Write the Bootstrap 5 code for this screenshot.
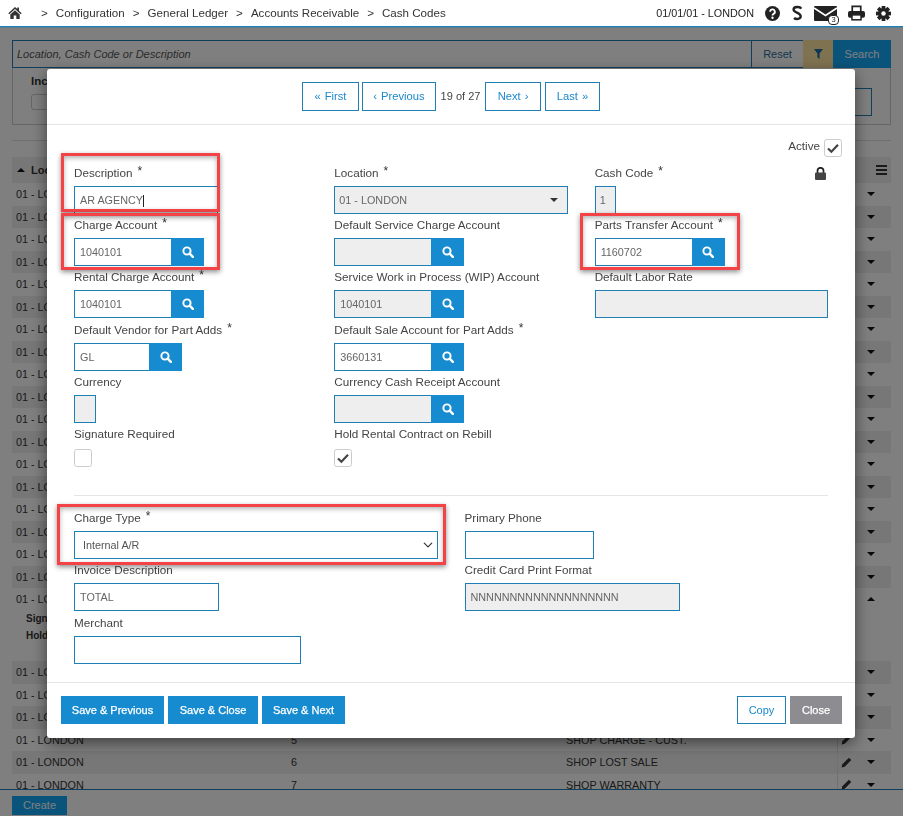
<!DOCTYPE html>
<html lang="en">
<head>
<meta charset="utf-8">
<title>Cash Codes</title>
<link href="https://cdn.jsdelivr.net/npm/bootstrap@5.3.0/dist/css/bootstrap.min.css" rel="stylesheet">
<style>
body{font-family:"Liberation Sans",Arial,sans-serif;font-size:10.8px;color:#333;background:#fff}
.ico{display:block;fill:currentColor}
.topnav{height:27px;padding:0 12px 0 8px;background:#fff;border-bottom:1px solid #1f7fb5;box-shadow:0 1px 0 rgba(31,127,181,.4);position:relative;z-index:1060;flex:none;flex-wrap:nowrap;color:#222}
.crumbs{margin:0;font-size:11.6px;--bs-breadcrumb-divider:'>';--bs-breadcrumb-item-padding-x:8px;--bs-breadcrumb-margin-bottom:0;--bs-breadcrumb-divider-color:#333;--bs-breadcrumb-item-active-color:#333;align-items:center}
.crumbs .breadcrumb-item:first-child{margin-right:11px}
.crumbs .breadcrumb-item+.breadcrumb-item{padding-left:8px}
.crumbs .crumb-first::before{content:">"}
.crumbs a{color:#333;text-decoration:none}
.nav-tools{gap:11px}
.nav-date{font-size:10.8px}
.mail-wrap{position:relative;width:23px;height:15px;margin-top:1px}
.mail-badge{position:absolute;left:14px;top:9px;width:11px;height:10px;background:#fff;border:1px solid #222;border-radius:4px;font-size:7.5px;line-height:8px;text-align:center;color:#222}
.bgmain{min-height:0;padding:13px 12px 0 12px;overflow:hidden}
.srch-in{height:28px;border:1px solid #1f7fb5;border-radius:0;font-size:11px;padding:0 4px;font-style:italic;box-shadow:none}
.srch-in::placeholder{color:#555}
.bg-btn{border-radius:0;font-size:11px;padding:0;height:28px;display:flex;align-items:center;justify-content:center}
.bg-reset{width:53px;background:#fff;border:1px solid #1f7fb5;color:#1f6f9f}
.bg-filter{width:31px;background:#ffe4a0;border:0;color:#1a6fa8}
.bg-search{width:58px;background:#14a8f8;border:0;color:#fff}
.filter-panel{height:57px;border:1px solid #ccc;border-top:0;padding:6px 18px 0 18px;position:relative}
.filter-title{font-size:11.5px;font-weight:700;line-height:14px}
.filter-row{margin-top:4px}
.filter-box{width:100px;height:16px;margin-top:2px;border:1px solid #ccc;border-radius:3px}
.filter-input{width:100px;height:28px;margin-top:-4px;border:1px solid #1f7fb5}
.thin-line{margin:15px 0 16px;border-top:1px solid #ddd;opacity:1}
.grid-head{height:26px;background:#eee;font-size:11px;font-weight:700;padding-left:5px}
.head-left{gap:6px}
.cu{width:0;height:0;border-left:4px solid transparent;border-right:4px solid transparent;border-bottom:4px solid #111;display:block}
.cd{width:0;height:0;border-left:4px solid transparent;border-right:4px solid transparent;border-top:4px solid #111;display:block}
.g-row{height:22.5px;display:flex;align-items:center}
.g-row:nth-child(even){background:#eee}
.g-big{height:73px;display:block;background:#fff!important;position:relative}
.g-big-top{height:22.5px;display:flex;align-items:center}
.g-c1{width:275px;padding-left:4px;flex:none}
.g-c2{width:275px;padding-left:4px;flex:none}
.g-c3{flex:1 1 auto;padding-left:4px;min-width:0}
.g-c4{width:23px;height:100%;flex:none;border-left:1px solid #e2e2e2;display:flex;align-items:center;justify-content:center;padding-right:5px}
.g-c5{width:31px;flex:none;display:flex;justify-content:center;padding-right:10px}
.g-det{font-size:10px;font-weight:700;line-height:17px;padding-left:14px;margin-top:-1px}
.bgfoot{height:27px;flex:none;border-top:1px solid #1f7fb5;background:#fff;padding:6px 0 0 12px}
.btn-create{width:55px;height:19px;background:#14a8f8;color:#fff;border:0;border-radius:0;font-size:11px;padding:0;display:block}

.dlg{max-width:808px;width:808px;margin:69px 0 0 47px}
.dlg .modal-content{border:0;border-radius:3px;box-shadow:0 5px 15px rgba(0,0,0,.5);position:relative;color:#444}
.dlg .modal-header{height:56px;padding:0;border-bottom:1px solid #e5e5e5;border-radius:0;gap:3px;font-size:11px}
.pg-btn{height:29px;padding:0;background:#fff;color:#1a88cc;border:1px solid #1f7fb5;border-radius:0;font-size:11.2px;display:flex;align-items:center;justify-content:center;gap:4px}
.pg-first{width:57px}.pg-prev{width:74px}.pg-next{width:56px}.pg-last{width:55px;margin-left:1px}
.pg-of{width:43px;text-align:center;color:#444}
.dlg .modal-body{padding:14px 27px 0;height:557px;flex:none}
.act-line{height:18px;margin-right:-14px;margin-bottom:8px;font-size:11.7px;gap:4px}
.act-text{position:relative;top:-2px}
.lbl{display:block;height:16px;line-height:16px;margin:0 0 5px;font-size:11.7px;color:#444;white-space:nowrap}
.req{font-size:12px;position:relative;top:-2px;margin-left:5px;color:#333}
.fld{height:28px;min-height:0;padding:0 5px;font-size:10.8px;color:#666;border:1px solid #1f7fb5;border-radius:0;box-shadow:none}
.fld:disabled{background-color:#eee;color:#666;opacity:1}
.form-grp{height:52.2px}
.form-grid{--bs-gutter-x:27px}
.w-145{width:144px}
.w-145b{width:145px}
.w-21{width:21px;padding:0 4px}
.w-22{width:22px}
.w-234{width:234px}
.w-364{width:364px}
.w-129{width:129px}
.w-215{width:215px}
.w-227{width:227px}
.has-caret{background:#fff linear-gradient(#222,#222) no-repeat 68px 8px/1px 12px}
.look-a{width:130px}
.look-b{width:108px}
.look-a .fld,.look-b .fld{min-width:0}
.look-btn{width:33px;flex:none;background:#178bd0;color:#fff;border:0;border-radius:0;padding:0;display:flex;align-items:center;justify-content:center;height:28px}
.sel-caret{background-image:url("data:image/svg+xml,%3Csvg xmlns='http://www.w3.org/2000/svg' viewBox='0 0 8 4'%3E%3Cpath d='M0 0h8L4 4z' fill='%23333'/%3E%3C/svg%3E");background-size:8px 4px;background-position:right 9px center;padding:0 4px}
.sel-chev{background-size:14px 10px;background-position:right 2px center;padding:0 8px;color:#555}
.chk{width:18px;height:18px;margin:0;display:block;border:1px solid #ccc;border-radius:3px;background-color:#fff;box-shadow:none;flex:none}
.chk:checked{background-color:#fff;border-color:#ccc;background-size:18px 18px;background-image:url("data:image/svg+xml,%3Csvg xmlns='http://www.w3.org/2000/svg' viewBox='0 0 18 18'%3E%3Cpath d='M4 9.500l3.400 3.200L14 5.800' fill='none' stroke='%23444' stroke-width='2.200'/%3E%3C/svg%3E")}
.chk-wrap{padding-top:2px}
.lock-ico{margin:2px 2px 0 0}
.split{border:0;border-top:1px solid #e5e5e5;opacity:1;margin:17px 0 14px}
.form-grp2{height:52px}
.form-grp3{height:53px}
.dlg .modal-footer{height:56px;padding:0 13px 1px 14px;border-top:1px solid #e5e5e5;border-radius:0;justify-content:space-between;flex-wrap:nowrap}
.dlg .modal-footer>*{margin:0}
.ft-btn{height:28px;border-radius:0;font-size:11px;padding:0;color:#fff;background:#178bd0;border:0;-webkit-text-stroke:.25px #fff}
.b-prev{width:103px}.b-close{width:90px}.b-next{width:83px}
.b-copy{width:49px;background:#fff;color:#1a88cc;border:1px solid #1f7fb5;-webkit-text-stroke:0}
.b-shut{width:52px;background:#8c8c91}
.mark-box{position:absolute;border:3px solid #f44347;box-shadow:0 2px 5px rgba(0,0,0,.45),inset 0 2px 5px rgba(0,0,0,.3);pointer-events:none}
.m-desc{left:14px;top:84px;width:159px;height:59px}
.m-charge{left:14px;top:144px;width:159px;height:57px}
.m-parts{left:533px;top:144px;width:160px;height:57px}
.m-type{left:10px;top:435px;width:389px;height:61px}
</style>
</head>
<body class="d-flex flex-column vh-100 overflow-hidden">
<svg class="d-none" xmlns="http://www.w3.org/2000/svg">
  <symbol id="i-search" viewBox="0 0 14 14"><circle cx="5.800" cy="5.800" r="4.200" fill="none" stroke="currentColor" stroke-width="2.300"/><path d="M9 9l3.600 3.600" stroke="currentColor" stroke-width="2.800" stroke-linecap="round"/></symbol>
  <symbol id="i-pencil" viewBox="0 0 12 12"><path d="M8.600.8l2.600 2.600-7.200 7.200-3.400.9.900-3.500z" fill="currentColor"/></symbol>
</svg>

<nav class="navbar topnav justify-content-between">
  <ol class="breadcrumb crumbs">
    <li class="breadcrumb-item"><a href="#" aria-label="Home"><svg class="ico" width="14" height="14" viewBox="0 0 14 14"><path d="M7 1L.3 7.200l1 1.100L7 3l5.700 5.300 1-1.100L11 4.700V1.500H9.300v1.600z"/><path d="M2.300 8.400L7 4.200l4.700 4.200V13H8.300V9.500H5.700V13H2.300z"/></svg></a></li>
    <li class="breadcrumb-item crumb-first"><a href="#">Configuration</a></li>
    <li class="breadcrumb-item"><a href="#">General Ledger</a></li>
    <li class="breadcrumb-item"><a href="#">Accounts Receivable</a></li>
    <li class="breadcrumb-item active">Cash Codes</li>
  </ol>
  <div class="d-flex align-items-center nav-tools">
    <span class="nav-date">01/01/01 - LONDON</span>
    <svg class="ico" width="15" height="15" viewBox="0 0 14 14"><circle cx="7" cy="7" r="7"/><path d="M4.800 5.400a2.200 2.200 0 1 1 3.300 1.900c-.8.500-1.100.9-1.100 1.600" fill="none" stroke="#fff" stroke-width="1.700"/><circle cx="7" cy="11" r="1.100" fill="#fff"/></svg>
    <svg class="ico" width="12" height="16" viewBox="0 0 14 18"><path d="M12 3.800C10.400 1.200 3 1.200 3 5c0 3.800 8.300 3.400 8.300 7.800 0 3.600-5.600 3.900-7.800 2" fill="none" stroke="#222" stroke-width="2.800"/></svg>
    <div class="mail-wrap"><svg class="ico" width="23" height="15" viewBox="0 0 23 15"><rect width="23" height="15" rx="1"/><path d="M0 2l11.500 7.500L23 2" fill="none" stroke="#fff" stroke-width="1.700"/></svg><span class="mail-badge">3</span></div>
    <svg class="ico" width="17" height="16" viewBox="0 0 18 16"><path d="M4.500 6V1h9v5" fill="none" stroke="#222" stroke-width="1.800"/><rect y="6" width="18" height="7" rx="2"/><rect x="4.200" y="10" width="9.600" height="5.200" fill="#fff" stroke="#222" stroke-width="1.600"/></svg>
    <svg class="ico" width="15" height="15" viewBox="0 0 16 16"><g><rect x="6" width="4" height="16"/><rect x="6" width="4" height="16" transform="rotate(45 8 8)"/><rect x="6" width="4" height="16" transform="rotate(90 8 8)"/><rect x="6" width="4" height="16" transform="rotate(135 8 8)"/></g><circle cx="8" cy="8" r="5.800"/><circle cx="8" cy="8" r="2.400" fill="#fff"/></svg>
  </div>
</nav>

<main class="flex-grow-1 bgmain">
  <div class="input-group flex-nowrap">
    <input type="text" class="form-control srch-in" placeholder="Location, Cash Code or Description">
    <button class="btn bg-btn bg-reset" type="button">Reset</button>
    <button class="btn bg-btn bg-filter" type="button" aria-label="Filter"><svg class="ico" width="9" height="10" viewBox="0 0 10 11"><path d="M0 0h10L6.200 5v6L3.800 9.500V5z"/></svg></button>
    <button class="btn bg-btn bg-search" type="button">Search</button>
  </div>
  <div class="filter-panel">
    <div class="filter-title">Inc</div>
    <div class="d-flex justify-content-between filter-row">
      <div class="filter-box"></div>
      <div class="filter-input"></div>
    </div>
  </div>
  <hr class="thin-line">
  <div class="grid-head d-flex align-items-center justify-content-between">
    <span class="d-flex align-items-center head-left"><i class="cu"></i><span>Location</span></span>
    <svg class="ico me-1" width="11" height="10" viewBox="0 0 11 10"><rect width="11" height="2"/><rect y="4" width="11" height="2"/><rect y="8" width="11" height="2"/></svg>
  </div>
  <div>
    <div class="g-row"><span class="g-c1">01 - LONDON</span><span class="g-c2"></span><span class="g-c3"></span><span class="g-c4"><svg class="ico" width="11" height="11"><use href="#i-pencil"/></svg></span><span class="g-c5"><i class="cd"></i></span></div>
    <div class="g-row"><span class="g-c1">01 - LONDON</span><span class="g-c2"></span><span class="g-c3"></span><span class="g-c4"><svg class="ico" width="11" height="11"><use href="#i-pencil"/></svg></span><span class="g-c5"><i class="cd"></i></span></div>
    <div class="g-row"><span class="g-c1">01 - LONDON</span><span class="g-c2"></span><span class="g-c3"></span><span class="g-c4"><svg class="ico" width="11" height="11"><use href="#i-pencil"/></svg></span><span class="g-c5"><i class="cd"></i></span></div>
    <div class="g-row"><span class="g-c1">01 - LONDON</span><span class="g-c2"></span><span class="g-c3"></span><span class="g-c4"><svg class="ico" width="11" height="11"><use href="#i-pencil"/></svg></span><span class="g-c5"><i class="cd"></i></span></div>
    <div class="g-row"><span class="g-c1">01 - LONDON</span><span class="g-c2"></span><span class="g-c3"></span><span class="g-c4"><svg class="ico" width="11" height="11"><use href="#i-pencil"/></svg></span><span class="g-c5"><i class="cd"></i></span></div>
    <div class="g-row"><span class="g-c1">01 - LONDON</span><span class="g-c2"></span><span class="g-c3"></span><span class="g-c4"><svg class="ico" width="11" height="11"><use href="#i-pencil"/></svg></span><span class="g-c5"><i class="cd"></i></span></div>
    <div class="g-row"><span class="g-c1">01 - LONDON</span><span class="g-c2"></span><span class="g-c3"></span><span class="g-c4"><svg class="ico" width="11" height="11"><use href="#i-pencil"/></svg></span><span class="g-c5"><i class="cd"></i></span></div>
    <div class="g-row"><span class="g-c1">01 - LONDON</span><span class="g-c2"></span><span class="g-c3"></span><span class="g-c4"><svg class="ico" width="11" height="11"><use href="#i-pencil"/></svg></span><span class="g-c5"><i class="cd"></i></span></div>
    <div class="g-row"><span class="g-c1">01 - LONDON</span><span class="g-c2"></span><span class="g-c3"></span><span class="g-c4"><svg class="ico" width="11" height="11"><use href="#i-pencil"/></svg></span><span class="g-c5"><i class="cd"></i></span></div>
    <div class="g-row"><span class="g-c1">01 - LONDON</span><span class="g-c2"></span><span class="g-c3"></span><span class="g-c4"><svg class="ico" width="11" height="11"><use href="#i-pencil"/></svg></span><span class="g-c5"><i class="cd"></i></span></div>
    <div class="g-row"><span class="g-c1">01 - LONDON</span><span class="g-c2"></span><span class="g-c3"></span><span class="g-c4"><svg class="ico" width="11" height="11"><use href="#i-pencil"/></svg></span><span class="g-c5"><i class="cd"></i></span></div>
    <div class="g-row"><span class="g-c1">01 - LONDON</span><span class="g-c2"></span><span class="g-c3"></span><span class="g-c4"><svg class="ico" width="11" height="11"><use href="#i-pencil"/></svg></span><span class="g-c5"><i class="cd"></i></span></div>
    <div class="g-row"><span class="g-c1">01 - LONDON</span><span class="g-c2"></span><span class="g-c3"></span><span class="g-c4"><svg class="ico" width="11" height="11"><use href="#i-pencil"/></svg></span><span class="g-c5"><i class="cd"></i></span></div>
    <div class="g-row"><span class="g-c1">01 - LONDON</span><span class="g-c2"></span><span class="g-c3"></span><span class="g-c4"><svg class="ico" width="11" height="11"><use href="#i-pencil"/></svg></span><span class="g-c5"><i class="cd"></i></span></div>
    <div class="g-row"><span class="g-c1">01 - LONDON</span><span class="g-c2"></span><span class="g-c3"></span><span class="g-c4"><svg class="ico" width="11" height="11"><use href="#i-pencil"/></svg></span><span class="g-c5"><i class="cd"></i></span></div>
    <div class="g-row"><span class="g-c1">01 - LONDON</span><span class="g-c2"></span><span class="g-c3"></span><span class="g-c4"><svg class="ico" width="11" height="11"><use href="#i-pencil"/></svg></span><span class="g-c5"><i class="cd"></i></span></div>
    <div class="g-row"><span class="g-c1">01 - LONDON</span><span class="g-c2"></span><span class="g-c3"></span><span class="g-c4"><svg class="ico" width="11" height="11"><use href="#i-pencil"/></svg></span><span class="g-c5"><i class="cd"></i></span></div>
    <div class="g-row"><span class="g-c1">01 - LONDON</span><span class="g-c2"></span><span class="g-c3"></span><span class="g-c4"><svg class="ico" width="11" height="11"><use href="#i-pencil"/></svg></span><span class="g-c5"><i class="cd"></i></span></div>
    <div class="g-row g-big">
      <div class="g-big-top"><span class="g-c1">01 - LONDON</span><span class="g-c2"></span><span class="g-c3"></span><span class="g-c4"></span><span class="g-c5"><i class="cu"></i></span></div>
      <div class="g-det">Sign<br>Hold</div>
    </div>
    <div class="g-row"><span class="g-c1">01 - LONDON</span><span class="g-c2"></span><span class="g-c3"></span><span class="g-c4"><svg class="ico" width="11" height="11"><use href="#i-pencil"/></svg></span><span class="g-c5"><i class="cd"></i></span></div>
    <div class="g-row"><span class="g-c1">01 - LONDON</span><span class="g-c2"></span><span class="g-c3"></span><span class="g-c4"><svg class="ico" width="11" height="11"><use href="#i-pencil"/></svg></span><span class="g-c5"><i class="cd"></i></span></div>
    <div class="g-row"><span class="g-c1">01 - LONDON</span><span class="g-c2"></span><span class="g-c3"></span><span class="g-c4"><svg class="ico" width="11" height="11"><use href="#i-pencil"/></svg></span><span class="g-c5"><i class="cd"></i></span></div>
    <div class="g-row"><span class="g-c1">01 - LONDON</span><span class="g-c2">5</span><span class="g-c3">SHOP CHARGE - CUST.</span><span class="g-c4"><svg class="ico" width="11" height="11"><use href="#i-pencil"/></svg></span><span class="g-c5"><i class="cd"></i></span></div>
    <div class="g-row"><span class="g-c1">01 - LONDON</span><span class="g-c2">6</span><span class="g-c3">SHOP LOST SALE</span><span class="g-c4"><svg class="ico" width="11" height="11"><use href="#i-pencil"/></svg></span><span class="g-c5"><i class="cd"></i></span></div>
    <div class="g-row"><span class="g-c1">01 - LONDON</span><span class="g-c2">7</span><span class="g-c3">SHOP WARRANTY</span><span class="g-c4"><svg class="ico" width="11" height="11"><use href="#i-pencil"/></svg></span><span class="g-c5"><i class="cd"></i></span></div>
  </div>
</main>
<footer class="bgfoot"><button class="btn btn-create" type="button">Create</button></footer>

<div class="modal-backdrop show"></div>
<div class="modal d-block" role="dialog" aria-modal="true">
  <div class="modal-dialog dlg">
    <div class="modal-content">
      <div class="modal-header justify-content-center">
        <button class="btn pg-btn pg-first" type="button"><span>«</span>First</button>
        <button class="btn pg-btn pg-prev" type="button"><span>‹</span>Previous</button>
        <span class="pg-of">19 of 27</span>
        <button class="btn pg-btn pg-next" type="button">Next<span>›</span></button>
        <button class="btn pg-btn pg-last" type="button">Last<span>»</span></button>
      </div>
      <div class="modal-body">
        <div class="d-flex justify-content-end align-items-center act-line"><span class="act-text">Active</span><input class="form-check-input chk" type="checkbox" checked aria-label="Active"></div>
        <div class="row form-grid">
          <div class="col-4">
            <div class="form-grp"><label class="lbl">Description<span class="req">*</span></label><input class="form-control fld w-145 has-caret" value="AR AGENCY"></div>
            <div class="form-grp"><label class="lbl">Charge Account<span class="req">*</span></label><div class="input-group flex-nowrap look-a"><input class="form-control fld" value="1040101"><button class="btn look-btn" type="button" aria-label="Search"><svg class="ico" width="12" height="12"><use href="#i-search"/></svg></button></div></div>
            <div class="form-grp"><label class="lbl">Rental Charge Account<span class="req">*</span></label><div class="input-group flex-nowrap look-a"><input class="form-control fld" value="1040101"><button class="btn look-btn" type="button" aria-label="Search"><svg class="ico" width="12" height="12"><use href="#i-search"/></svg></button></div></div>
            <div class="form-grp"><label class="lbl">Default Vendor for Part Adds<span class="req">*</span></label><div class="input-group flex-nowrap look-b"><input class="form-control fld" value="GL"><button class="btn look-btn" type="button" aria-label="Search"><svg class="ico" width="12" height="12"><use href="#i-search"/></svg></button></div></div>
            <div class="form-grp"><label class="lbl">Currency</label><input class="form-control fld w-22" disabled></div>
            <div class="form-grp"><label class="lbl">Signature Required</label><div class="chk-wrap"><input class="form-check-input chk" type="checkbox" aria-label="Signature Required"></div></div>
          </div>
          <div class="col-4">
            <div class="form-grp"><label class="lbl">Location<span class="req">*</span></label><select class="form-select fld sel-caret w-234" disabled><option>01 - LONDON</option></select></div>
            <div class="form-grp"><label class="lbl">Default Service Charge Account</label><div class="input-group flex-nowrap look-a"><input class="form-control fld" disabled><button class="btn look-btn" type="button" aria-label="Search"><svg class="ico" width="12" height="12"><use href="#i-search"/></svg></button></div></div>
            <div class="form-grp"><label class="lbl">Service Work in Process (WIP) Account</label><div class="input-group flex-nowrap look-a"><input class="form-control fld" value="1040101" disabled><button class="btn look-btn" type="button" aria-label="Search"><svg class="ico" width="12" height="12"><use href="#i-search"/></svg></button></div></div>
            <div class="form-grp"><label class="lbl">Default Sale Account for Part Adds<span class="req">*</span></label><div class="input-group flex-nowrap look-a"><input class="form-control fld" value="3660131"><button class="btn look-btn" type="button" aria-label="Search"><svg class="ico" width="12" height="12"><use href="#i-search"/></svg></button></div></div>
            <div class="form-grp"><label class="lbl">Currency Cash Receipt Account</label><div class="input-group flex-nowrap look-a"><input class="form-control fld" disabled><button class="btn look-btn" type="button" aria-label="Search"><svg class="ico" width="12" height="12"><use href="#i-search"/></svg></button></div></div>
            <div class="form-grp"><label class="lbl">Hold Rental Contract on Rebill</label><div class="chk-wrap"><input class="form-check-input chk" type="checkbox" checked aria-label="Hold Rental Contract on Rebill"></div></div>
          </div>
          <div class="col-4">
            <div class="form-grp"><div class="d-flex justify-content-between"><label class="lbl">Cash Code<span class="req">*</span></label><svg class="ico lock-ico" width="11" height="13" viewBox="0 0 11 13" fill="#222"><path d="M2.500 6V3.800a3 3 0 0 1 6 0V6" fill="none" stroke="#222" stroke-width="1.700"/><rect y="5.500" width="11" height="7.500" rx="1"/></svg></div><input class="form-control fld w-21" value="1" disabled></div>
            <div class="form-grp"><label class="lbl">Parts Transfer Account<span class="req">*</span></label><div class="input-group flex-nowrap look-a"><input class="form-control fld" value="1160702"><button class="btn look-btn" type="button" aria-label="Search"><svg class="ico" width="12" height="12"><use href="#i-search"/></svg></button></div></div>
            <div class="form-grp"><label class="lbl">Default Labor Rate</label><input class="form-control fld" disabled></div>
          </div>
        </div>
        <hr class="split">
        <div class="row form-grid">
          <div class="col-6">
            <div class="form-grp2"><label class="lbl">Charge Type<span class="req">*</span></label><select class="form-select fld sel-chev w-364"><option>Internal A/R</option></select></div>
            <div class="form-grp3"><label class="lbl">Invoice Description</label><input class="form-control fld w-145b" value="TOTAL"></div>
            <div class="form-grp3"><label class="lbl">Merchant</label><input class="form-control fld w-227"></div>
          </div>
          <div class="col-6">
            <div class="form-grp2"><label class="lbl">Primary Phone</label><input class="form-control fld w-129"></div>
            <div class="form-grp3"><label class="lbl">Credit Card Print Format</label><input class="form-control fld w-215" value="NNNNNNNNNNNNNNNNNNN" disabled></div>
          </div>
        </div>
      </div>
      <div class="modal-footer">
        <div class="d-flex gap-1">
          <button class="btn ft-btn b-prev" type="button">Save &amp; Previous</button>
          <button class="btn ft-btn b-close" type="button">Save &amp; Close</button>
          <button class="btn ft-btn b-next" type="button">Save &amp; Next</button>
        </div>
        <div class="d-flex gap-1">
          <button class="btn ft-btn b-copy" type="button">Copy</button>
          <button class="btn ft-btn b-shut" type="button">Close</button>
        </div>
      </div>
      <div class="mark-box m-desc"></div>
      <div class="mark-box m-charge"></div>
      <div class="mark-box m-parts"></div>
      <div class="mark-box m-type"></div>
    </div>
  </div>
</div>
<script src="https://cdn.jsdelivr.net/npm/bootstrap@5.3.0/dist/js/bootstrap.bundle.min.js"></script>
</body>
</html>
